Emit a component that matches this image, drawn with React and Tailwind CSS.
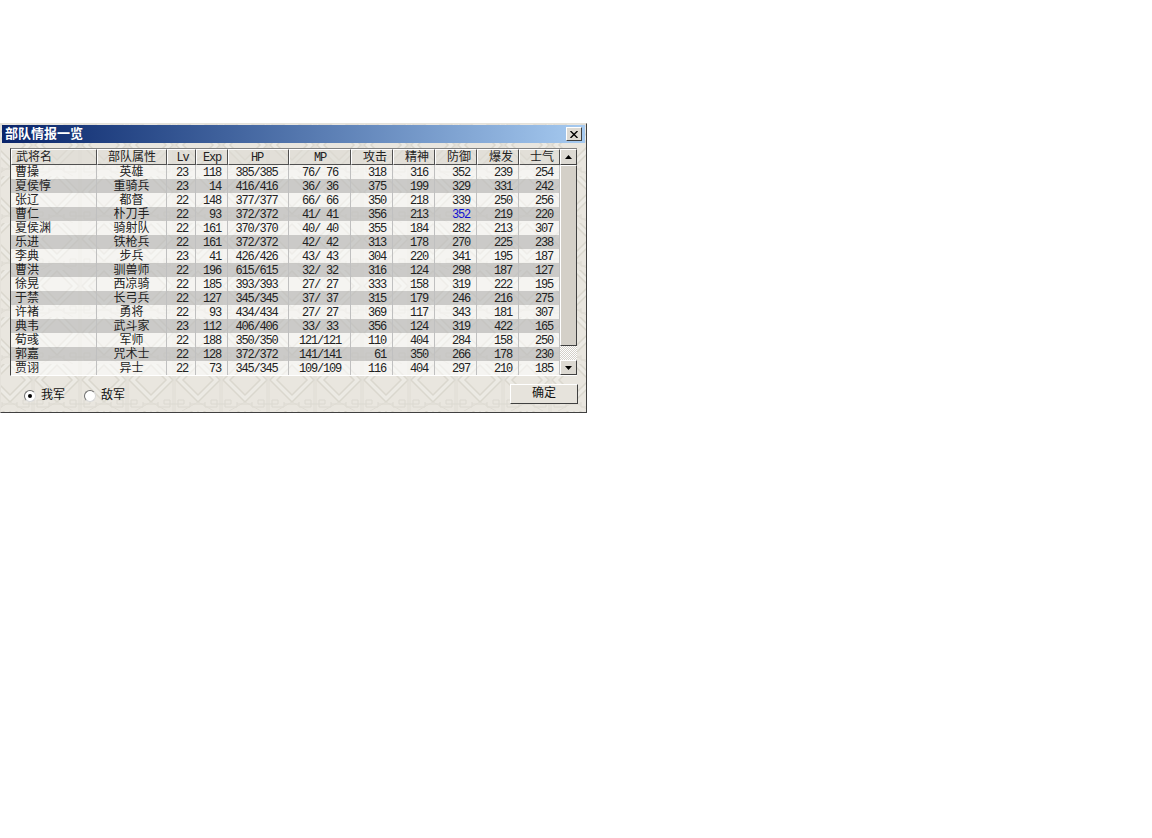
const cols = 'grid grid-cols-[86px_70px_29px_32px_61px_62px_42px_42px_42px_42px_41px]';

const digits = 'text-[12px] tracking-[-1.2px]';

const headers = [
  { label: '武将名', cls: 'justify-start pl-[4px] text-[12px]' },
  { label: '部队属性', cls: 'justify-center text-[12px]' },
  { label: 'Lv', cls: `justify-center pl-[2px] ${digits}` },
  { label: 'Exp', cls: `justify-end pr-[6px] ${digits}` },
  { label: 'HP', cls: `justify-center pr-[3px] ${digits}` },
  { label: 'MP', cls: `justify-center ${digits}` },
  { label: '攻击', cls: 'justify-end pr-[5px] text-[12px]' },
  { label: '精神', cls: 'justify-end pr-[5px] text-[12px]' },
  { label: '防御', cls: 'justify-end pr-[5px] text-[12px]' },
  { label: '爆发', cls: 'justify-end pr-[5px] text-[12px]' },
  { label: '士气', cls: 'justify-end pr-[5px] text-[12px]' },
];

const rows = [
  ['曹操', '英雄', '23', '118', '385/385', '76/ 76', '318', '316', '352', '239', '254'],
  ['夏侯惇', '重骑兵', '23', '14', '416/416', '36/ 36', '375', '199', '329', '331', '242'],
  ['张辽', '都督', '22', '148', '377/377', '66/ 66', '350', '218', '339', '250', '256'],
  ['曹仁', '朴刀手', '22', '93', '372/372', '41/ 41', '356', '213', '352', '219', '220'],
  ['夏侯渊', '骑射队', '22', '161', '370/370', '40/ 40', '355', '184', '282', '213', '307'],
  ['乐进', '铁枪兵', '22', '161', '372/372', '42/ 42', '313', '178', '270', '225', '238'],
  ['李典', '步兵', '23', '41', '426/426', '43/ 43', '304', '220', '341', '195', '187'],
  ['曹洪', '驯兽师', '22', '196', '615/615', '32/ 32', '316', '124', '298', '187', '127'],
  ['徐晃', '西凉骑', '22', '185', '393/393', '27/ 27', '333', '158', '319', '222', '195'],
  ['于禁', '长弓兵', '22', '127', '345/345', '37/ 37', '315', '179', '246', '216', '275'],
  ['许褚', '勇将', '22', '93', '434/434', '27/ 27', '369', '117', '343', '181', '307'],
  ['典韦', '武斗家', '23', '112', '406/406', '33/ 33', '356', '124', '319', '422', '165'],
  ['荀彧', '军师', '22', '188', '350/350', '121/121', '110', '404', '284', '158', '250'],
  ['郭嘉', '咒术士', '22', '128', '372/372', '141/141', '61', '350', '266', '178', '230'],
  ['贾诩', '异士', '22', '73', '345/345', '109/109', '116', '404', '297', '210', '185'],
];

const cellAlign = [
  'justify-start pl-[4px] text-[12px]',
  'justify-center text-[12px]',
  `justify-center pl-[2px] ${digits}`,
  `justify-end pr-[6px] ${digits}`,
  `justify-center pr-[3px] ${digits}`,
  `justify-center pl-[1px] ${digits}`,
  `justify-end pr-[6px] ${digits}`,
  `justify-end pr-[6px] ${digits}`,
  `justify-end pr-[6px] ${digits}`,
  `justify-end pr-[6px] ${digits}`,
  `justify-end pr-[6px] ${digits}`,
];

// Windows 2000 style raised edge
const raised = 'border border-t-white border-l-white border-r-[#404040] border-b-[#404040]';

// Background texture of the dialog: nested diamonds over a fret band
const Texture = () => (
  <svg className="absolute inset-0 w-full h-full" aria-hidden="true">
    <defs>
      <pattern id="tile" width="47" height="47" patternUnits="userSpaceOnUse" x="32" y="5">
        <path
          d="M24 -6L46 16L24 38L2 16ZM24 1L39 16L24 31L9 16Z"
          fill="#ecEAe4"
          fillRule="evenodd"
          stroke="#dad7ce"
          strokeWidth="1.5"
        />
        <path d="M1 0V47M46 0V47" fill="none" stroke="#dfdcd4" strokeWidth="1" />
        <path
          d="M0 40H10V36H4V43H16V38M47 40H37V36H43V43H31V38M16 40H31"
          fill="none"
          stroke="#dbd8d0"
          strokeWidth="1"
        />
        <path d="M24 38L8 47M24 38L40 47" fill="none" stroke="#dfdcd4" strokeWidth="1" />
      </pattern>
    </defs>
    <rect width="100%" height="100%" fill="url(#tile)" />
  </svg>
);

const Arrow = ({ down }) => (
  <svg width="7" height="4" viewBox="0 0 7 4" aria-hidden="true">
    <path d={down ? 'M0 0H7L3.5 4Z' : 'M3.5 0L7 4H0Z'} fill="#000" />
  </svg>
);

const Radio = ({ checked, label }) => (
  <label className="flex items-center gap-[5px] leading-none">
    <span className="w-[12px] h-[12px] rounded-full bg-white border border-t-[#6e6e6e] border-l-[#6e6e6e] border-r-[#d8d8d8] border-b-[#d8d8d8] flex items-center justify-center">
      {checked && <span className="w-[4px] h-[4px] rounded-full bg-black" />}
    </span>
    <span className="text-[12px] text-[#111]">{label}</span>
  </label>
);

export default function App() {
  return (
    <div className="min-h-screen bg-white pt-[123px] font-['Liberation_Mono','Noto_Sans_CJK_SC',monospace]">
      <div className="relative w-[587px] h-[290px] bg-[#e9e6df] border border-t-[#e4e1da] border-l-[#e4e1da] border-r-[#404040] border-b-[#404040]">
        <Texture />
        <div className="relative flex flex-col h-full p-[1px]">
          {/* Title bar */}
          <div className="h-[18px] shrink-0 flex items-center justify-between pl-[3px] pr-[3px] bg-gradient-to-r from-[#0a246a] to-[#a6caf0]">
            <span className="text-[13px] font-bold text-white leading-none">部队情报一览</span>
            <button className={`w-[16px] h-[14px] flex items-center justify-center bg-[#dcd9d2] ${raised}`}>
              <svg width="8" height="7" viewBox="0 0 8 7" aria-hidden="true">
                <path d="M0.5 0L7.5 7M7.5 0L0.5 7" stroke="#000" strokeWidth="1.4" fill="none" />
              </svg>
            </button>
          </div>

          {/* List with its scroll bar */}
          <div className="flex ml-[8px] mt-[5px] w-[567px] border-l border-t border-l-[#404040] border-t-[#808080] border-b border-b-white">
            <div className="w-[549px]">
              <div className={`${cols} h-[16px]`}>
                {headers.map((h) => (
                  <div
                    key={h.label}
                    className={`flex items-center leading-none pt-px text-[#222] border border-t-white border-l-white border-r-[#505050] border-b-[#505050] bg-[#dedbd4]/60 ${h.cls}`}
                  >
                    {h.label}
                  </div>
                ))}
              </div>
              {rows.map((row, i) => (
                <div key={row[0]} className={`${cols} h-[14px] ${i % 2 ? 'bg-[#bcbcbc]/65' : 'bg-white/55'}`}>
                  {row.map((cell, j) => (
                    <div
                      key={j}
                      className={`flex items-center whitespace-pre leading-none pt-px border-r border-r-[#c0c0c0] ${cellAlign[j]} ${
                        i === 3 && j === 8 ? 'text-[#1010d0]' : 'text-[#222]'
                      }`}
                    >
                      {cell}
                    </div>
                  ))}
                </div>
              ))}
            </div>

            {/* Scroll bar */}
            <div className="w-[17px] flex flex-col">
              <div className={`h-[16px] flex items-center justify-center bg-[#dcd9d2] ${raised}`}>
                <Arrow />
              </div>
              <div className={`h-[181px] bg-[#d4d0c8] ${raised}`} />
              <div className="flex-1 bg-[repeating-conic-gradient(#d4d0c8_0_25%,#ffffff_0_50%)] bg-size-[2px_2px]" />
              <div className={`h-[15px] flex items-center justify-center bg-[#dcd9d2] ${raised}`}>
                <Arrow down />
              </div>
            </div>
          </div>

          {/* Footer */}
          <div className="flex-1 flex items-start justify-between pl-[22px] pr-[7px]">
            <div className="flex items-center gap-[19px] pt-[14px]">
              <Radio checked label="我军" />
              <Radio label="敌军" />
            </div>
            <div className="pt-[8px]">
              <button className={`w-[68px] h-[20px] flex items-center justify-center text-[12px] leading-none text-[#111] bg-[#e6e3dc] ${raised}`}>
                确定
              </button>
            </div>
          </div>
        </div>
      </div>
    </div>
  );
}
